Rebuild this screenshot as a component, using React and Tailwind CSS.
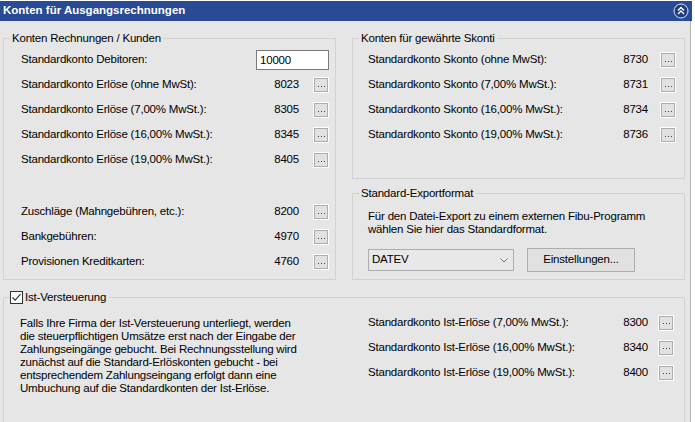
import React from 'react';

// small "..." picker button used next to every account number
const PickButton = ({ className = '' }) => (
    <span className={`w-[16px] h-[16px] border border-white flex shrink-0 ${className}`}>
        <span className="flex-1 border border-[#adadad] bg-[#e1e1e1] flex items-center justify-center">
            <span className="flex gap-[2px] mt-[2px]">
                <span className="w-px h-px bg-[#444]" />
                <span className="w-px h-px bg-[#444]" />
                <span className="w-px h-px bg-[#444]" />
            </span>
        </span>
    </span>
);

const AccountRow = ({ label, value, gap }) => (
    <div className="flex items-center h-[20px]">
        <span className="flex-1 whitespace-nowrap">{label}</span>
        <span>{value}</span>
        <PickButton className={gap} />
    </div>
);

const CollapseIcon = () => (
    <svg width="16" height="16" viewBox="0 0 16 16" className="shrink-0">
        <circle cx="8" cy="8" r="7" fill="#1f3c82" stroke="#dfe6f5" strokeWidth="1" />
        <polyline points="5,7.5 8,4.5 11,7.5" fill="none" stroke="#fff" strokeWidth="1.4" />
        <polyline points="5,11 8,8 11,11" fill="none" stroke="#fff" strokeWidth="1.4" />
    </svg>
);

const GroupLegend = ({ children }) => (
    <legend className="ml-[6px] px-[2px] leading-[14px] whitespace-nowrap">{children}</legend>
);

const revenueAccounts = [
    { label: 'Standardkonto Erlöse (ohne MwSt):', value: '8023' },
    { label: 'Standardkonto Erlöse (7,00% MwSt.):', value: '8305' },
    { label: 'Standardkonto Erlöse (16,00% MwSt.):', value: '8345' },
    { label: 'Standardkonto Erlöse (19,00% MwSt.):', value: '8405' },
];

const feeAccounts = [
    { label: 'Zuschläge (Mahngebühren, etc.):', value: '8200' },
    { label: 'Bankgebühren:', value: '4970' },
    { label: 'Provisionen Kreditkarten:', value: '4760' },
];

const discountAccounts = [
    { label: 'Standardkonto Skonto (ohne MwSt):', value: '8730' },
    { label: 'Standardkonto Skonto (7,00% MwSt.):', value: '8731' },
    { label: 'Standardkonto Skonto (16,00% MwSt.):', value: '8734' },
    { label: 'Standardkonto Skonto (19,00% MwSt.):', value: '8736' },
];

const cashBasisAccounts = [
    { label: 'Standardkonto Ist-Erlöse (7,00% MwSt.):', value: '8300' },
    { label: 'Standardkonto Ist-Erlöse (16,00% MwSt.):', value: '8340' },
    { label: 'Standardkonto Ist-Erlöse (19,00% MwSt.):', value: '8400' },
];

export default function App() {
    return (
        <div className="w-[695px] h-[422px] overflow-hidden bg-white pt-[1px] font-['Liberation_Sans',Arial,sans-serif] text-[11.5px] tracking-[-0.2px] text-black">
            <div className="w-[692px] h-[20px] bg-[#294a94] flex items-center justify-between pl-[3px] pr-[3px]">
                <span className="text-white font-bold text-[11.5px] tracking-normal">Konten für Ausgangsrechnungen</span>
                <CollapseIcon />
            </div>

            <div className="w-[691px] h-[401px] bg-[#e6e6e6] border-r border-[#b4b4b4] pl-[3px] pt-[10px]">
                <div className="flex items-start gap-[16px]">
                    {/* invoices / customers */}
                    <fieldset className="w-[333px] border border-[#d2d2d2]">
                        <GroupLegend>Konten Rechnungen / Kunden</GroupLegend>
                        <div className="pl-[17px] pr-[6px] pt-[5px] pb-[7px] flex flex-col gap-[5px]">
                            <div className="flex items-center h-[20px]">
                                <span className="flex-1">Standardkonto Debitoren:</span>
                                <input
                                    readOnly
                                    value="10000"
                                    className="w-[73px] h-[20px] border border-[#7a7a7a] bg-white px-[3px] outline-none"
                                />
                            </div>
                            {revenueAccounts.map(a => (
                                <AccountRow key={a.value} label={a.label} value={a.value} gap="ml-[14px]" />
                            ))}
                            <div className="mt-[27px] flex flex-col gap-[5px]">
                                {feeAccounts.map(a => (
                                    <AccountRow key={a.value} label={a.label} value={a.value} gap="ml-[14px]" />
                                ))}
                            </div>
                        </div>
                    </fieldset>

                    <div className="w-[333px] flex flex-col">
                        {/* granted discounts */}
                        <fieldset className="border border-[#d2d2d2]">
                            <GroupLegend>Konten für gewährte Skonti</GroupLegend>
                            <div className="pl-[15px] pr-[8px] pt-[5px] pb-[33px] flex flex-col gap-[5px]">
                                {discountAccounts.map(a => (
                                    <AccountRow key={a.value} label={a.label} value={a.value} gap="ml-[12px]" />
                                ))}
                            </div>
                        </fieldset>

                        {/* export format */}
                        <fieldset className="mt-[7px] border border-[#d2d2d2]">
                            <GroupLegend>Standard-Exportformat</GroupLegend>
                            <div className="pl-[15px] pr-[8px] pt-[10px] pb-[7px]">
                                <p className="leading-[13px]">
                                    Für den Datei-Export zu einem externen Fibu-Programm
                                    <br />
                                    wählen Sie hier das Standardformat.
                                </p>
                                <div className="mt-[12px] flex items-center h-[24px]">
                                    <div className="w-[146px] h-[22px] border border-[#adadad] bg-[#e8e8e8] flex items-center justify-between pl-[3px] pr-[5px]">
                                        <span>DATEV</span>
                                        <svg width="8" height="5" viewBox="0 0 8 5">
                                            <polyline points="0.5,0.5 4,4 7.5,0.5" fill="none" stroke="#777" strokeWidth="1" />
                                        </svg>
                                    </div>
                                    <button className="ml-[13px] w-[108px] h-[24px] border border-[#adadad] bg-[#e1e1e1]">
                                        Einstellungen...
                                    </button>
                                </div>
                            </div>
                        </fieldset>
                    </div>
                </div>

                {/* cash-basis taxation */}
                <fieldset className="mt-[10px] w-[682px] h-[140px] border border-[#d2d2d2]">
                    <legend className="ml-[6px] leading-[14px]">
                        <span className="inline-flex items-center pr-[3px]">
                            <span className="w-[13px] h-[13px] border border-[#333] bg-white flex items-center justify-center">
                                <svg width="11" height="11" viewBox="0 0 11 11">
                                    <polyline points="1.5,5.5 4.2,8.2 9.5,2.2" fill="none" stroke="#333" strokeWidth="1.2" />
                                </svg>
                            </span>
                            <span className="ml-[2px]">Ist-Versteuerung</span>
                        </span>
                    </legend>
                    <div className="flex">
                        <p className="w-[348px] pl-[16px] pt-[11px] leading-[13px] whitespace-nowrap">
                            Falls Ihre Firma der Ist-Versteuerung unterliegt, werden
                            <br />
                            die steuerpflichtigen Umsätze erst nach der Eingabe der
                            <br />
                            Zahlungseingänge gebucht. Bei Rechnungsstellung wird
                            <br />
                            zunächst auf die Standard-Erlöskonten gebucht - bei
                            <br />
                            entsprechendem Zahlungseingang erfolgt dann eine
                            <br />
                            Umbuchung auf die Standardkonten der Ist-Erlöse.
                        </p>
                        <div className="flex-1 pl-[16px] pr-[10px] pt-[7px] flex flex-col gap-[5px]">
                            {cashBasisAccounts.map(a => (
                                <AccountRow key={a.value} label={a.label} value={a.value} gap="ml-[10px]" />
                            ))}
                        </div>
                    </div>
                </fieldset>
            </div>
        </div>
    );
}
